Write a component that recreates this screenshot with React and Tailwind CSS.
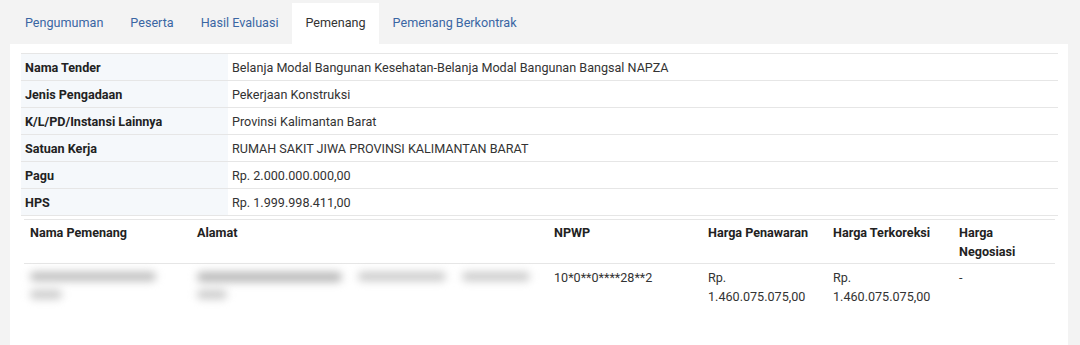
export default function App() {
  const tabs = ["Pengumuman", "Peserta", "Hasil Evaluasi", "Pemenang", "Pemenang Berkontrak"];
  const rows = [
    ["Nama Tender", "Belanja Modal Bangunan Kesehatan-Belanja Modal Bangunan Bangsal NAPZA"],
    ["Jenis Pengadaan", "Pekerjaan Konstruksi"],
    ["K/L/PD/Instansi Lainnya", "Provinsi Kalimantan Barat"],
    ["Satuan Kerja", "RUMAH SAKIT JIWA PROVINSI KALIMANTAN BARAT"],
    ["Pagu", "Rp. 2.000.000.000,00"],
    ["HPS", "Rp. 1.999.998.411,00"],
  ];
  return (
    <div className="w-[1080px] h-[345px] bg-[#f3f3f3] overflow-hidden text-[12.6px] leading-[19px]" style={{ fontFamily: "Roboto, 'Liberation Sans', sans-serif" }}>
      <div className="flex h-[44px] pl-[11.5px] pt-[3px]">
        {tabs.map((t) => (
          <div
            key={t}
            className={
              t === "Pemenang"
                ? "px-[13.5px] pt-[10px] bg-white text-[#333]"
                : "px-[13.5px] pt-[10px] text-[#3a66a3]"
            }
          >
            {t}
          </div>
        ))}
      </div>
      <div className="mx-[10px] w-[1058px] h-[310px] bg-white pt-[9px] pl-[11px]">
        <table className="w-[1037px] border-collapse border-t border-[#e6e6e6]">
          <tbody>
            {rows.map(([k, v]) => (
              <tr key={k} className="border-b border-[#e6e6e6] h-[27px]">
                <td className="w-[207px] bg-[#f5f8fb] font-bold text-[#222] pl-[4px] pr-[4px] align-middle">{k}</td>
                <td className="text-[#333] pl-[4px] align-middle">{v}</td>
              </tr>
            ))}
          </tbody>
        </table>
        <div className="ml-[3px] mt-[3px] w-[1031px] border-t border-[#e6e6e6]">
          <div className="flex border-b border-[#e6e6e6] h-[44px] pt-[3px] font-bold text-[#222]">
            <div className="w-[167px] pl-[6px]">Nama Pemenang</div>
            <div className="w-[357px] pl-[6px]">Alamat</div>
            <div className="w-[154px] pl-[6px]">NPWP</div>
            <div className="w-[125px] pl-[6px]">Harga Penawaran</div>
            <div className="w-[126px] pl-[6px]">Harga Terkoreksi</div>
            <div className="w-[102px] pl-[6px]">Harga<br />Negosiasi</div>
          </div>
          <div className="flex pt-[4px] text-[#333]">
            <div className="w-[167px] pl-[6px] pt-[4px]">
              <div className="blur-[4px]">
                <div className="h-[9px] w-[126px] bg-[#bdbdbd] rounded-full"></div>
                <div className="h-[9px] w-[32px] bg-[#cacaca] rounded-full mt-[9px]"></div>
              </div>
            </div>
            <div className="w-[357px] pl-[6px] pt-[4px]">
              <div className="blur-[4px]">
                <div className="flex gap-[16px]">
                  <div className="h-[10px] w-[145px] bg-[#b8b8b8] rounded-full"></div>
                  <div className="h-[9px] w-[88px] bg-[#cacaca] rounded-full"></div>
                  <div className="h-[9px] w-[68px] bg-[#cacaca] rounded-full"></div>
                </div>
                <div className="h-[9px] w-[30px] bg-[#cacaca] rounded-full mt-[8px]"></div>
              </div>
            </div>
            <div className="w-[154px] pl-[6px]">10*0**0****28**2</div>
            <div className="w-[125px] pl-[6px]">Rp.<br />1.460.075.075,00</div>
            <div className="w-[126px] pl-[6px]">Rp.<br />1.460.075.075,00</div>
            <div className="w-[102px] pl-[6px]">-</div>
          </div>
        </div>
      </div>
    </div>
  );
}
